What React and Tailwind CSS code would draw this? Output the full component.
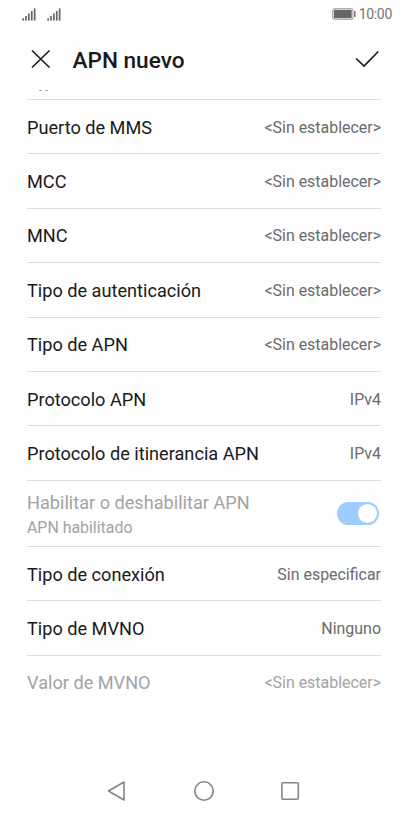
import React from "react";

const rows = [
  { label: "Puerto de MMS", value: "<Sin establecer>" },
  { label: "MCC", value: "<Sin establecer>" },
  { label: "MNC", value: "<Sin establecer>" },
  { label: "Tipo de autenticación", value: "<Sin establecer>" },
  { label: "Tipo de APN", value: "<Sin establecer>" },
  { label: "Protocolo APN", value: "IPv4" },
  { label: "Protocolo de itinerancia APN", value: "IPv4" },
  { label: "Habilitar o deshabilitar APN", summary: "APN habilitado" },
  { label: "Tipo de conexión", value: "Sin especificar" },
  { label: "Tipo de MVNO", value: "Ninguno" },
  { label: "Valor de MVNO", value: "<Sin establecer>", disabled: true },
];

const Signal = () => (
  <svg width="14" height="13" viewBox="0 0 14 13" fill="#666">
    <rect x="0.3" y="10.3" width="1.7" height="2.3" />
    <rect x="3.1" y="8" width="1.7" height="4.6" />
    <rect x="6" y="5.5" width="1.7" height="7.1" />
    <rect x="8.9" y="3" width="1.7" height="9.6" />
    <rect x="11.8" y="0.4" width="1.7" height="12.2" />
  </svg>
);

const StatusBar = () => (
  <div className="flex h-7 items-center justify-between pl-[22px] pr-4">
    <div className="flex gap-[10.5px]">
      <Signal />
      <Signal />
    </div>
    <div className="flex items-center gap-[3px]">
      <svg width="24" height="12" viewBox="0 0 24 12">
        <rect x="0.6" y="0.6" width="20.3" height="10.8" rx="2" fill="#fff" stroke="#b0b0b0" strokeWidth="1.2" />
        <rect x="1.8" y="1.8" width="17.9" height="8.4" fill="#666" />
        <rect x="22" y="3" width="1.5" height="6" fill="#777" />
      </svg>
      <span className="text-sm leading-none tracking-[-0.3px] text-[#757575]">10:00</span>
    </div>
  </div>
);

const Header = () => (
  <div className="flex h-[62px] items-center pl-[31px] pr-[28px]">
    <svg width="20" height="20" viewBox="0 0 20 20" fill="none" stroke="#1a1a1a" strokeWidth="1.6">
      <path d="M1 1.5 18.5 18.5M18.5 1.5 1 18.5" />
    </svg>
    <h1 className="ml-[21.5px] pt-[5px] text-[22.6px] font-medium leading-none text-[#1a1a1a]">APN nuevo</h1>
    <svg className="ml-auto" width="25" height="18" viewBox="0 0 25 18" fill="none" stroke="#1a1a1a" strokeWidth="1.7">
      <path d="M1.2 8.5 9 16 23.3 1.5" />
    </svg>
  </div>
);

const SwitchRow = ({ label, summary }) => (
  <div className="flex h-[66.2px] items-center justify-between border-t border-[#dedede]">
    <div className="pt-[3px] text-[#a3a3a3]">
      <p className="text-[18.15px] leading-[25px]">{label}</p>
      <p className="text-[15.9px] leading-[25px]">{summary}</p>
    </div>
    <div className="mr-0.5 flex h-[23px] w-[42px] items-center justify-end rounded-full bg-[#9fccff] pr-0.5">
      <div className="size-[19px] rounded-full bg-white" />
    </div>
  </div>
);

const Row = ({ label, value, disabled }) => (
  <div className="flex h-[54.4px] items-center justify-between border-t border-[#dedede] pt-[2px]">
    <span className={`text-[18.15px] leading-7 ${disabled ? "text-[#a3a3a3]" : "text-[#1a1a1a]"}`}>{label}</span>
    <span className={`text-[15.95px] leading-6 ${disabled ? "text-[#a3a3a3]" : "text-[#6b6b6b]"}`}>{value}</span>
  </div>
);

const NavBar = () => (
  <div className="flex h-[50px] items-center justify-center gap-[66px]">
    <svg width="20" height="22" viewBox="0 0 20 22" fill="none" stroke="#858585" strokeWidth="1.6" strokeLinejoin="round">
      <path d="M1.5 11 17 2V20Z" />
    </svg>
    <svg width="22" height="22" viewBox="0 0 22 22" fill="none" stroke="#858585" strokeWidth="1.6">
      <circle cx="11" cy="11" r="9.2" />
    </svg>
    <svg width="20" height="20" viewBox="0 0 20 20" fill="none" stroke="#858585" strokeWidth="1.6">
      <rect x="0.9" y="1.8" width="16.4" height="16.4" rx="1" />
    </svg>
  </div>
);

const App = () => {
  return (
    <div className="flex h-[816px] w-[408px] flex-col bg-[#fefefe] font-['Roboto',sans-serif]">
      <StatusBar />
      <Header />
      <div className="flex-1 overflow-hidden px-[27px]">
        {/* tail of the row scrolled under the header */}
        <svg className="block" width="354" height="9" viewBox="0 0 354 9" fill="#999">
          <path d="M12.3 0h2.5v1h-2.5zM18.3 0h2.5v1h-2.5z" />
        </svg>
        {rows.map((row) =>
          row.summary ? <SwitchRow key={row.label} {...row} /> : <Row key={row.label} {...row} />
        )}
      </div>
      <NavBar />
    </div>
  );
};

export default App;
